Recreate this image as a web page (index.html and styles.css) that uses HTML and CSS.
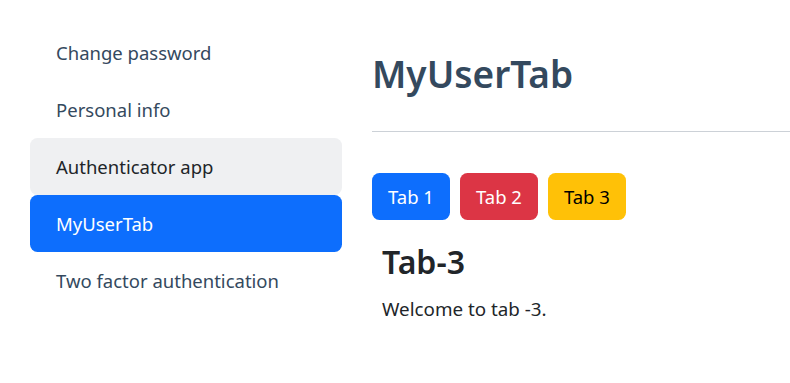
FILE: index.html
```html
<!DOCTYPE html>
<html lang="en">
<head>
<meta charset="UTF-8">
<meta name="viewport" content="width=device-width, initial-scale=1.0">
<title>Manage account</title>
<link rel="stylesheet" href="styles.css">
</head>
<body>
<div class="page">
    <ul class="side-nav">
        <li><a href="#">Change password</a></li>
        <li><a href="#">Personal info</a></li>
        <li><a href="#" class="hover">Authenticator app</a></li>
        <li><a href="#" class="active">MyUserTab</a></li>
        <li><a href="#">Two factor authentication</a></li>
    </ul>
    <div class="content">
        <h1 class="page-title">MyUserTab</h1>
        <hr>
        <div class="tab-buttons">
            <button class="btn btn-blue">Tab 1</button>
            <button class="btn btn-red">Tab 2</button>
            <button class="btn btn-yellow">Tab 3</button>
        </div>
        <div class="tab-pane">
            <h2>Tab-3</h2>
            <p>Welcome to tab -3.</p>
        </div>
    </div>
</div>
</body>
</html>
```

FILE: styles.css
```css
*{
    box-sizing: border-box;
}
body{
    margin: 0;
    font-family: "Noto Sans", "Open Sans", Arial, sans-serif;
    font-size: 18.5px;
    line-height: 30px;
    color: #212529;
    background: #fff;
    overflow: hidden;
}
.page{
    display: flex;
    gap: 30px;
    padding: 24px 0 0 30px;
}
.side-nav{
    list-style: none;
    margin: 0;
    padding: 0;
    width: 312px;
    flex-shrink: 0;
}
.side-nav a{
    display: block;
    padding: 13.5px 26px;
    color: #34495e;
    text-decoration: none;
    border-radius: 7.5px;
}
.side-nav a.hover{
    background-color: #eff0f2;
    color: #212529;
}
.side-nav a.active{
    background-color: #0d6efd;
    color: #fff;
}
.content{
    flex: 1;
    min-width: 0;
}
.page-title{
    margin: 26px 0 0 0;
    font-size: 37px;
    line-height: 48px;
    font-weight: 600;
    color: #34495e;
}
hr{
    margin: 33px 0 0 0;
    border: 0;
    border-top: 1px solid #ccd1d7;
}
.tab-buttons{
    display: flex;
    gap: 10px;
    margin-top: 41px;
}
.btn{
    font-family: inherit;
    font-size: 18.5px;
    line-height: 30px;
    padding: 7.5px 15px;
    border: 1px solid transparent;
    border-radius: 7.5px;
    cursor: pointer;
}
.btn-blue{
    background-color: #0d6efd;
    color: #fff;
}
.btn-red{
    background-color: #dc3545;
    color: #fff;
}
.btn-yellow{
    background-color: #ffc107;
    color: #000;
}
.tab-pane{
    padding: 10px;
}
.tab-pane h2{
    margin: 13px 0 13px 0;
    font-size: 32px;
    line-height: 38px;
    font-weight: 600;
}
.tab-pane p{
    margin: 0;
    font-size: 18.8px;
}
```
